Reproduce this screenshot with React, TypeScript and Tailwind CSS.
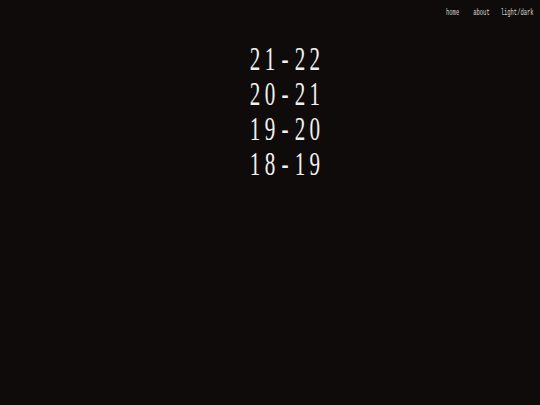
export default function App() {
  const seasons = [
    ["21", "22"],
    ["20", "21"],
    ["19", "20"],
    ["18", "19"],
  ];
  return (
    <div className="h-[405px] w-full overflow-hidden bg-[#0e0b0a] text-[#f2f0ee]">
      <div className="flex justify-end pr-[6px] pt-[8px]">
        <nav
          className="flex origin-right scale-x-[0.61] text-[9px] leading-[11px] text-[#dcdad8]"
          style={{ fontFamily: '"Liberation Mono", "Courier New", monospace' }}
        >
          <span>home</span>
          <span className="ml-[23px]">about</span>
          <span className="ml-[18px]">light/dark</span>
        </nav>
      </div>
      <main
        className="mt-[22px] flex flex-col items-center pl-[34px] text-[34px] leading-[35px]"
        style={{ fontFamily: '"Liberation Serif", "Times New Roman", serif' }}
      >
        {seasons.map(([a, b]) => (
          <div key={a} className="flex scale-x-[0.62] tracking-[7px]">
            <span>{a}</span>
            <span className="mx-[3px]">-</span>
            <span>{b}</span>
          </div>
        ))}
      </main>
    </div>
  );
}
